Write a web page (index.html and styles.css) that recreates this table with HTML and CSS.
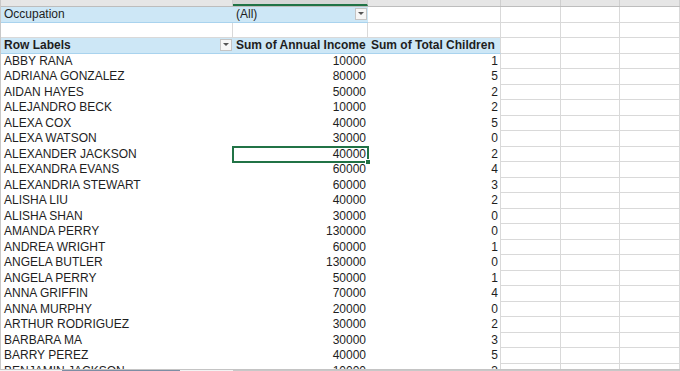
FILE: index.html
```html
<!DOCTYPE html>
<html>
<head>
<meta charset="utf-8">
<link rel="stylesheet" href="styles.css">
</head>
<body>
<div class="sheet">
  <div class="r hd">
    <div>A</div><div class="hsel">B</div><div>C</div><div>D</div><div>E</div><div>F</div>
  </div>
  <div class="r">
    <div class="blue fl">Occupation</div>
    <div class="blue fl flx"><span>(All)</span><span class="dd"><svg width="6" height="4" viewBox="0 0 6 4"><path d="M0 0h6L3 3z" fill="#555"/></svg></span></div>
    <div class="g"></div><div class="g"></div><div class="g"></div><div class="g"></div>
  </div>
  <div class="r">
    <div class="g"></div><div class="g"></div><div class="g"></div><div class="g"></div><div class="g"></div><div class="g"></div>
  </div>
  <div class="r">
    <div class="blue hb flx"><span>Row Labels</span><span class="dd"><svg width="6" height="4" viewBox="0 0 6 4"><path d="M0 0h6L3 3z" fill="#555"/></svg></span></div>
    <div class="blue hb">Sum of Annual Income</div>
    <div class="blue hb cr">Sum of Total Children</div>
    <div class="g"></div><div class="g"></div><div class="g"></div>
  </div>
  <div class="r"><div>ABBY RANA</div><div class="n">10000</div><div class="n cr">1</div><div class="g"></div><div class="g"></div><div class="g"></div></div>
  <div class="r"><div>ADRIANA GONZALEZ</div><div class="n">80000</div><div class="n cr">5</div><div class="g"></div><div class="g"></div><div class="g"></div></div>
  <div class="r"><div>AIDAN HAYES</div><div class="n">50000</div><div class="n cr">2</div><div class="g"></div><div class="g"></div><div class="g"></div></div>
  <div class="r"><div>ALEJANDRO BECK</div><div class="n">10000</div><div class="n cr">2</div><div class="g"></div><div class="g"></div><div class="g"></div></div>
  <div class="r"><div>ALEXA COX</div><div class="n">40000</div><div class="n cr">5</div><div class="g"></div><div class="g"></div><div class="g"></div></div>
  <div class="r"><div>ALEXA WATSON</div><div class="n">30000</div><div class="n cr">0</div><div class="g"></div><div class="g"></div><div class="g"></div></div>
  <div class="r"><div>ALEXANDER JACKSON</div><div class="n sel">40000</div><div class="n cr">2</div><div class="g"></div><div class="g"></div><div class="g"></div></div>
  <div class="r"><div>ALEXANDRA EVANS</div><div class="n">60000</div><div class="n cr">4</div><div class="g"></div><div class="g"></div><div class="g"></div></div>
  <div class="r"><div>ALEXANDRIA STEWART</div><div class="n">60000</div><div class="n cr">3</div><div class="g"></div><div class="g"></div><div class="g"></div></div>
  <div class="r"><div>ALISHA LIU</div><div class="n">40000</div><div class="n cr">2</div><div class="g"></div><div class="g"></div><div class="g"></div></div>
  <div class="r"><div>ALISHA SHAN</div><div class="n">30000</div><div class="n cr">0</div><div class="g"></div><div class="g"></div><div class="g"></div></div>
  <div class="r"><div>AMANDA PERRY</div><div class="n">130000</div><div class="n cr">0</div><div class="g"></div><div class="g"></div><div class="g"></div></div>
  <div class="r"><div>ANDREA WRIGHT</div><div class="n">60000</div><div class="n cr">1</div><div class="g"></div><div class="g"></div><div class="g"></div></div>
  <div class="r"><div>ANGELA BUTLER</div><div class="n">130000</div><div class="n cr">0</div><div class="g"></div><div class="g"></div><div class="g"></div></div>
  <div class="r"><div>ANGELA PERRY</div><div class="n">50000</div><div class="n cr">1</div><div class="g"></div><div class="g"></div><div class="g"></div></div>
  <div class="r"><div>ANNA GRIFFIN</div><div class="n">70000</div><div class="n cr">4</div><div class="g"></div><div class="g"></div><div class="g"></div></div>
  <div class="r"><div>ANNA MURPHY</div><div class="n">20000</div><div class="n cr">0</div><div class="g"></div><div class="g"></div><div class="g"></div></div>
  <div class="r"><div>ARTHUR RODRIGUEZ</div><div class="n">30000</div><div class="n cr">2</div><div class="g"></div><div class="g"></div><div class="g"></div></div>
  <div class="r"><div>BARBARA MA</div><div class="n">30000</div><div class="n cr">3</div><div class="g"></div><div class="g"></div><div class="g"></div></div>
  <div class="r"><div>BARRY PEREZ</div><div class="n">40000</div><div class="n cr">5</div><div class="g"></div><div class="g"></div><div class="g"></div></div>
  <div class="r"><div>BENJAMIN JACKSON</div><div class="n">10000</div><div class="n cr">3</div><div class="g"></div><div class="g"></div><div class="g"></div></div>
</div>
<div class="bar">
  <div class="tab1"></div>
  <div class="tab2"></div>
</div>
</body>
</html>
```

FILE: styles.css
```css
html, body {
  margin: 0;
  padding: 0;
}
body {
  width: 680px;
  height: 371px;
  overflow: hidden;
  display: flex;
  flex-direction: column;
  background: #fff;
  font-family: "Liberation Sans", Arial, sans-serif;
  font-size: 12px;
  color: #1e1e1e;
}
.sheet {
  flex: 1;
  overflow: hidden;
  border-left: 1px solid #c8c8c8;
}
.r {
  display: grid;
  grid-template-columns: 232px 135px 133px 60px 59px 1fr;
  height: 15.53px;
}
.r > div {
  box-sizing: border-box;
  padding: 0 3px;
  line-height: 15px;
  white-space: nowrap;
  overflow: hidden;
}
.hd {
  height: 20px;
  margin-top: -14px;
  background: #e6e6e6;
  border-bottom: 1px solid #bdbdbd;
}
.hd > div {
  text-align: center;
  line-height: 16px;
  font-size: 13px;
  color: #444;
  border-right: 1px solid #cfcfcf;
}
.hd > .hsel {
  background: #d6d6d6;
  border-bottom: 2px solid #217346;
}
.g {
  border-right: 1px solid #d9d9d9;
  border-bottom: 1px solid #d9d9d9;
}
.blue {
  background: #cde7f6;
}
.fl {
  border-bottom: 1px solid #a9d3ee;
}
.hb {
  font-weight: bold;
  border-bottom: 1px solid #a9d3ee;
}
.flx {
  display: flex;
  align-items: center;
  justify-content: space-between;
}
.r > .flx {
  padding-right: 0;
}
.dd {
  box-sizing: border-box;
  width: 12px;
  height: 12px;
  border: 1px solid #c4c4c4;
  background: #f6f6f6;
  display: flex;
  align-items: center;
  justify-content: center;
  margin-right: 1px;
}
.r > .n {
  text-align: right;
  padding-right: 2px;
}
.cr {
  border-right: 1px solid #d9d9d9;
}
.r > .sel {
  position: relative;
  overflow: visible;
  outline: 2px solid #217346;
  outline-offset: -1px;
  z-index: 1;
}
.sel::after {
  content: "";
  position: absolute;
  right: -3px;
  bottom: -3px;
  width: 4px;
  height: 4px;
  background: #217346;
  border: 1px solid #fff;
}
.bar {
  height: 1px;
  flex: none;
  background: #f3f3f3;
  border-top: 1px solid #c4c4c4;
  display: flex;
  align-items: flex-start;
  position: relative;
  z-index: 2;
}
.tab1 {
  margin-left: 62px;
  width: 118px;
  height: 4px;
  box-sizing: border-box;
  border: 1px solid #7d8ea4;
  background: #fff;
}
.tab2 {
  margin-left: 53px;
  flex: 1;
  height: 4px;
  box-sizing: border-box;
  border: 1px solid #c8c8c8;
  background: #fafafa;
}
```
